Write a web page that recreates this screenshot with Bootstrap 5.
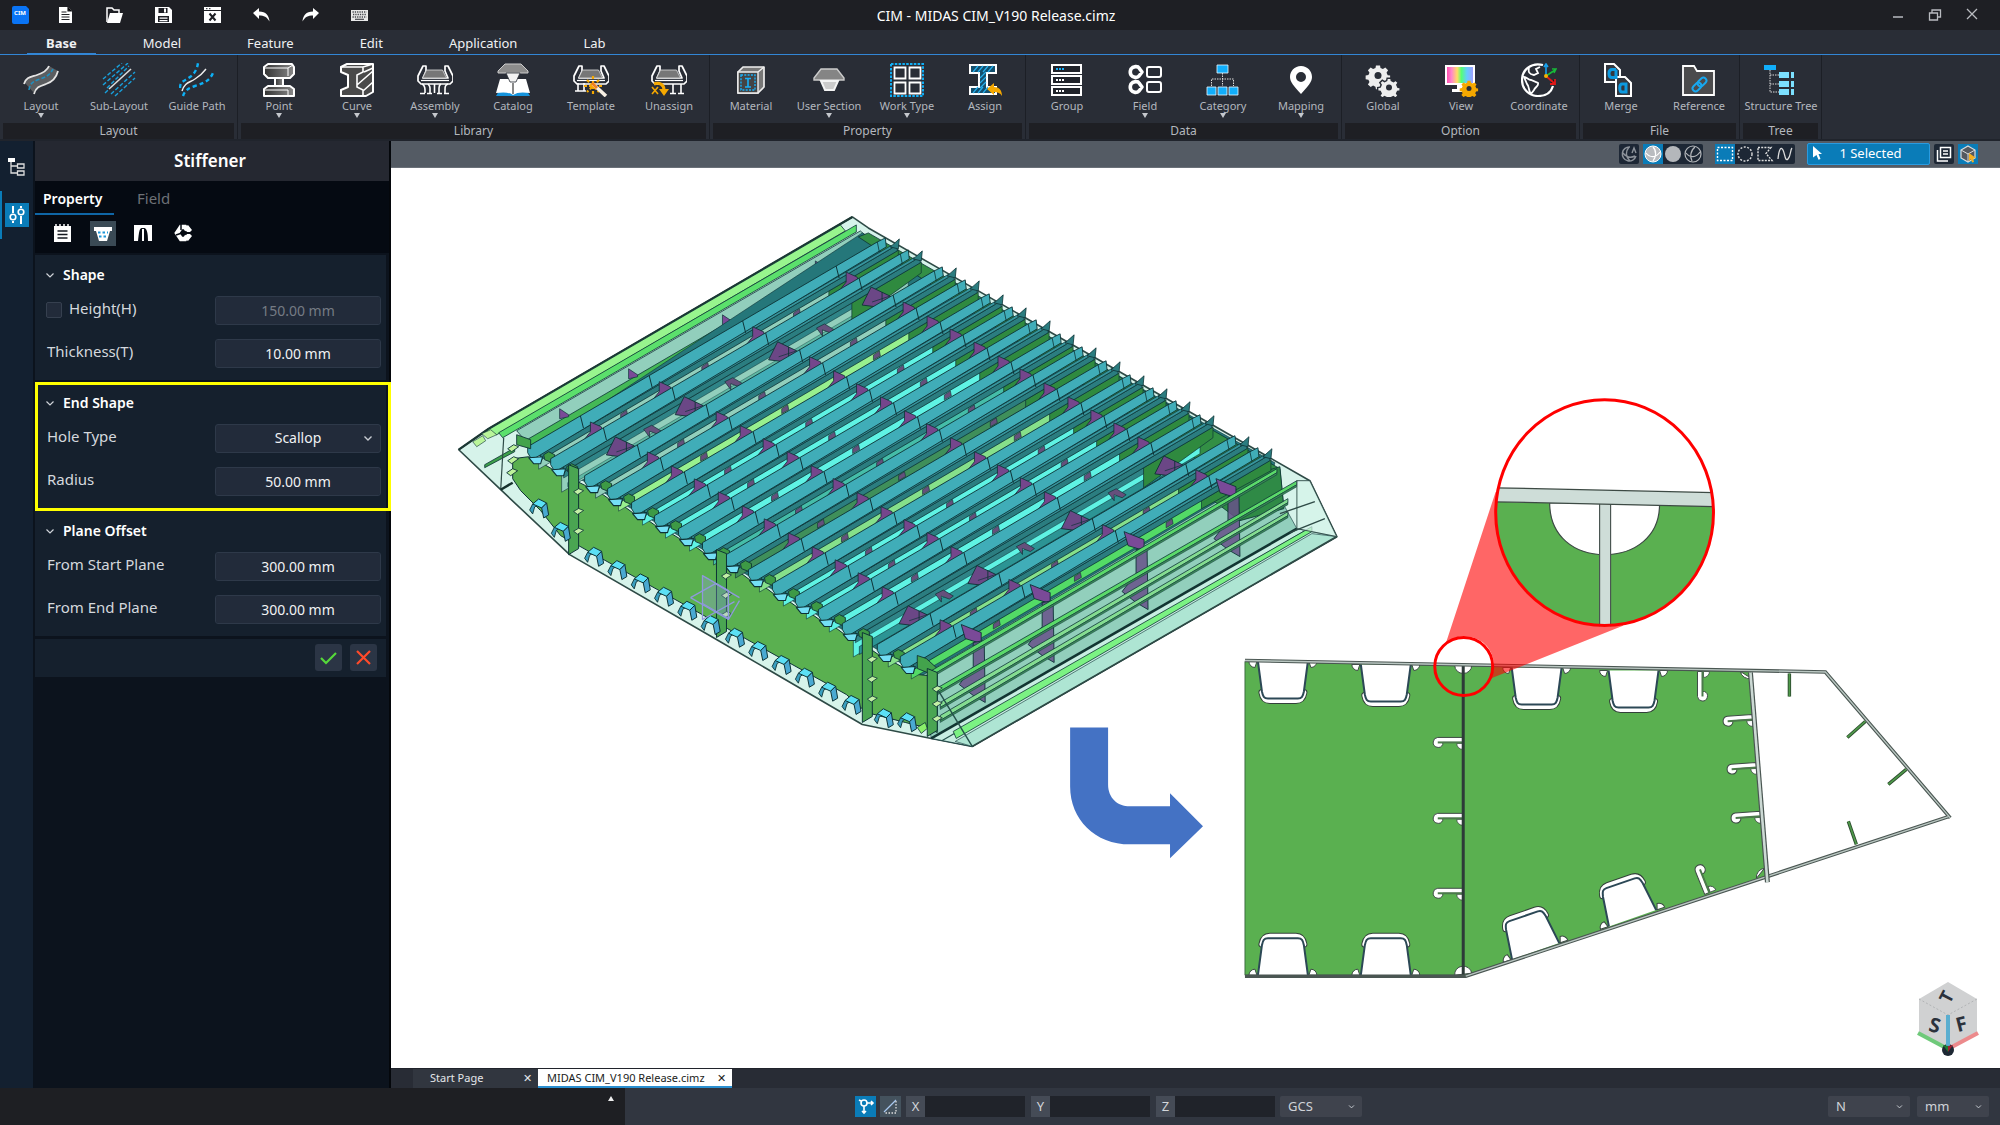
<!DOCTYPE html>
<html lang="en" data-bs-theme="dark">
<head>
<meta charset="utf-8">
<meta name="viewport" content="width=device-width, initial-scale=1">
<title>CIM - MIDAS CIM_V190 Release.cimz</title>
<link href="https://cdn.jsdelivr.net/npm/bootstrap@5.3.0/dist/css/bootstrap.min.css" rel="stylesheet">
<script src="https://cdn.jsdelivr.net/npm/bootstrap@5.3.0/dist/js/bootstrap.bundle.min.js"></script>
<style>
  body { font-family: "Noto Sans", "Open Sans", sans-serif; background: #0c131d; color: #e4e6ea; font-size: 14px; line-height: 20px; }
  button { font: inherit; color: inherit; background: none; border: 0; padding: 0; }
  svg { display: block; flex: none; }
  .titlebar { height: 30px; background: #1e1f24; padding: 0 20px 0 12px; color: #fff; }
  .apptitle { padding-top: 2px; }
  .quick { gap: 32px; }
  .appmark { margin-right: -4px; }
  .wincontrols { gap: 21px; color: #b9bbc0; }
  .tabrow { height: 25px; background: #292d36; border-bottom: 1px solid #3286d6; padding-left: 27px; gap: 28px; }
  .tabrow a { color: #f0f1f3; font-size: 13px; line-height: 26px; padding: 0 19px; text-decoration: none; height: 25px; }
  .tabrow a.active { font-weight: 700; border-bottom: 2px solid #3286d6; }
  .ribbon { background: #292d36; height: 86px; border-bottom: 2px solid #20242c; }
  .ribgroup { padding: 0 1px 1px 2px; border-right: 1px solid #1c1f26; }
  .ribbtn { width: 78px; height: 68px; padding-top: 8px; color: #b3b7be; font-size: 11px; line-height: 14px; white-space: nowrap; }
  .ribbtn > span { margin-top: 2px; }
  .ribbtn.drop::after { content: ""; border: 3px solid transparent; border-top: 5px solid #c5c8cd; border-bottom: 0; }
  .riblabel { background: #1e1f24; color: #b3b7be; font-size: 12px; line-height: 16px; height: 16px; margin: 0 2px 0 1px; }
  .rail { width: 34px; background: #132030; border-right: 1px solid #0b131d; padding-top: 2px; }
  .railtab { height: 48px; width: 33px; border-left: 2px solid transparent; padding-left: 3px; }
  .railtab.active { border-color: #0a7cb8; }
  .railtab.active svg { background: #0a7cb8; }
  .props { width: 357px; background: #0c131d; border-right: 2px solid #04070b; padding-left: 1px; }
  .propstitle { height: 40px; background: #252831; font-size: 17px; font-weight: 600; color: #fff; padding-right: 4px; }
  .proptabs { background: #050a12; height: 35px; }
  .proptabs a { color: #6d7176; text-decoration: none; font-size: 15px; width: 79px; line-height: 35px; height: 34px; padding-left: 8px; }
  .proptabs a.active { color: #fff; font-weight: 600; border-bottom: 2px solid #0f66a6; font-size: 14px; }
  .proptabs a + a { padding-left: 23px; }
  .proptools { background: #050a12; height: 37px; padding: 5px 0 0 15px; gap: 14px; }
  .proptools button { width: 26px; height: 25px; }
  .proptools button.active { background: #3a4a55; }
  .propbody { padding: 2px 3px 0 0; }
  .sect { background: #15202d; padding: 0 5px 12px 12px; margin-bottom: 3px; position: relative; }
  .sect h2 { font-size: 14px; font-weight: 600; color: #fff; line-height: 20px; margin: 0 0 0 -2px; padding: 10px 0 11px; gap: 8px; }
  .fieldrow { height: 29px; }
  .fieldrow + .fieldrow { margin-top: 14px; }
  .fieldrow label { font-size: 15px; color: #d4d8dd; line-height: 24px; height: 29px; }
  .fieldrow .form-control, .fieldrow .form-select { width: 166px; height: 29px; background-color: #222b3a; border: 1px solid #2e3949; border-radius: 3px; color: #f0f2f4; font-size: 14px; line-height: 20px; padding: 3px 8px; text-align: center; text-align-last: center; }
  .fieldrow .form-control:disabled { color: #757b84; }
  .fieldrow .form-check-input { width: 16px; height: 16px; margin: 6px 7px 0 -1px; background-color: #222b3a; border: 1px solid #36404f; border-radius: 2px; }
  .fieldrow .form-select, .unitsel { background-image: url("data:image/svg+xml,%3csvg xmlns='http://www.w3.org/2000/svg' viewBox='0 0 10 10'%3e%3cpath fill='none' stroke='%23c8ccd2' stroke-width='1.4' d='M1.500 3.500l3.500 3.500 3.500-3.500'/%3e%3c/svg%3e"); background-size: 10px 10px; background-position: right 7px center; background-repeat: no-repeat; }
  .callout { position: absolute; inset: -1px -5px -3px 0; border: 3px solid #ff0; pointer-events: none; }
  .actions { height: 38px; background: #15202d; padding-right: 9px; gap: 8px; }
  .actions button { width: 27px; height: 27px; background: #2b3545; border-radius: 3px; }
  .viewbar { height: 27px; background: #545b64; padding: 0 22px 0 0; border-bottom: 1px solid #6b7179; }
  .tool { background: #1d2735; border-radius: 2px; height: 20px; }
  .tool button { width: 20px; height: 20px; }
  .tool.setgap { margin-right: 12px; }
  .tool .active { background: #0a7cb8; }
  .selcount { width: 123px; height: 22px; background: #0a7cb8; border: 1px solid #2a9be0; border-radius: 2px; color: #fff; font-size: 13px; line-height: 18px; padding: 0 11px 2px 5px; }
  .stage { background: #fff; min-height: 0; position: relative; }
  .stage > svg.scene { width: 100%; height: 100%; }
  .navcube { position: absolute; right: 16px; bottom: 12px; }
  .doctabs { height: 20px; background: #282c35; border-top: 1px solid #20232b; padding-left: 22px; }
  .doctab { font-size: 11px; line-height: 18px; background: #31363f; color: #e4e6ea; padding: 0 6px 0 17px; width: 125px; }
  .doctab.active { background: #fff; color: #1a1c20; border-bottom: 2px solid #2a8fd0; width: 194px; padding-left: 9px; }
  .statusbar { height: 37px; background: #313640; }
  .msgbox { width: 31.25%; background: #1e1f23; padding: 8px 11px 0 0; }
  .coordtools { padding-left: 230px; gap: 4px; }
  .coordtools > button { width: 21px; height: 21px; background: #44525d; }
  .coordtools > button.active { background: #0a7cb8; }
  .axisbox { height: 21px; margin-right: 1px; margin-left: 1px; }
  .axisbox label { width: 19px; background: #454b56; color: #d4d7db; text-align: center; font-size: 13px; line-height: 21px; }
  .axisbox input { width: 100px; height: 21px; border: 0; border-radius: 0; background: #20232a; padding: 0 4px; }
  .unitsel { width: 82px; height: 21px; background-color: #3f434d; border: 0; border-radius: 2px; color: #d0d3d8; font-size: 13px; line-height: 21px; padding: 0 20px 0 8px; background-size: 7px 7px; }
  .unitsel.short { width: 72px; }
  .units { padding-right: 11px; gap: 7px; }
</style>
</head>
<body class="vh-100 d-flex flex-column overflow-hidden">

<header class="titlebar d-flex align-items-center">
  <div class="quick d-flex align-items-center flex-fill w-25">
    <svg class="appmark" width="17" height="18" viewBox="0 0 17 18"><path fill="#0a74f5" d="M2 0h12l3 3v13a2 2 0 0 1-2 2H2a2 2 0 0 1-2-2V2a2 2 0 0 1 2-2z"/><text x="8" y="9" font-size="6" font-weight="700" fill="#fff" text-anchor="middle">CIM</text></svg>
    <button aria-label="New"><svg width="17" height="18" viewBox="0 0 17 18"><path fill="#fff" d="M2 1h9l4 4v12H2z"/><path stroke="#1e1f24" stroke-width="1.200" d="M4.500 6h5M4.500 8.500h8M4.500 11h8M4.500 13.500h8M11 1v4h4"/></svg></button>
    <button aria-label="Open"><svg width="17" height="18" viewBox="0 0 17 18"><path fill="none" stroke="#fff" stroke-width="1.500" d="M1 16V2h5l2 2h5v4"/><path fill="#fff" d="M4 7h13l-3 10H1z"/></svg></button>
    <button aria-label="Save"><svg width="17" height="18" viewBox="0 0 17 18"><path fill="#fff" d="M0 1h14l3 3v13H0z"/><path fill="#1e1f24" d="M3.500 2h9v5h-9zM3 10h11v6H3z"/><path fill="#fff" d="M9 2.500h2v4H9zM4.500 11.500h8v1.200h-8zM4.500 14h8v1.200h-8z"/></svg></button>
    <button aria-label="Close model"><svg width="17" height="18" viewBox="0 0 17 18"><path fill="#fff" d="M0 1h17v16H0z"/><path stroke="#1e1f24" d="M0 4.500h17M2 2.700h1.500M5 2.700h1.500"/><path stroke="#1e1f24" stroke-width="2" d="M5.500 7.500l6 7M11.500 7.500l-6 7"/></svg></button>
    <button aria-label="Undo"><svg width="17" height="18" viewBox="0 0 17 18"><path fill="#fff" d="M0 7l6-5v3.500c7 0 10 4 10.500 10C14 11 11 9.500 6 9.500V13z"/></svg></button>
    <button aria-label="Redo"><svg width="17" height="18" viewBox="0 0 17 18"><path fill="#fff" d="M17 7l-6-5v3.500c-7 0-10 4-10.500 10C3 11 6 9.500 11 9.500V13z"/></svg></button>
    <button aria-label="Keyboard"><svg width="17" height="18" viewBox="0 0 17 18"><path fill="#e8e8e8" d="M0 4h17v11H0z"/><path stroke="#44464c" stroke-width="1.300" stroke-dasharray="1.300 1" d="M1.500 6h14M2 8.500h13.500M1.500 11h14"/><path stroke="#44464c" stroke-width="1.200" d="M4 13.300h9"/></svg></button>
  </div>
  <div class="apptitle text-center">CIM - MIDAS CIM_V190 Release.cimz</div>
  <div class="wincontrols d-flex justify-content-end align-items-center flex-fill w-25">
    <button aria-label="Minimize"><svg width="16" height="16" viewBox="0 0 16 16"><path stroke="currentColor" stroke-width="1.500" d="M3 10h10"/></svg></button>
    <button aria-label="Restore"><svg width="16" height="16" viewBox="0 0 16 16"><path fill="none" stroke="currentColor" stroke-width="1.300" d="M2.500 6h8v7h-8zM5 6V3h8.500v7H11"/></svg></button>
    <button aria-label="Close"><svg width="16" height="16" viewBox="0 0 16 16"><path stroke="currentColor" stroke-width="1.300" d="M3 2l10 10M13 2L3 12"/></svg></button>
  </div>
</header>

<nav class="tabrow d-flex">
  <a href="#" class="active">Base</a><a href="#">Model</a><a href="#">Feature</a><a href="#">Edit</a><a href="#">Application</a><a href="#">Lab</a>
</nav>

<svg width="0" height="0" class="position-absolute" aria-hidden="true">
  <defs>
    <linearGradient id="gMetal" x1="0" x2="1"><stop offset="0" stop-color="#333"/><stop offset="1" stop-color="#888"/></linearGradient>
    <linearGradient id="gRain" x1="0" x2="1"><stop offset="0" stop-color="#f4a"/><stop offset=".2" stop-color="#f8c"/><stop offset=".4" stop-color="#fd6"/><stop offset=".55" stop-color="#5f7"/><stop offset=".75" stop-color="#6cf"/><stop offset="1" stop-color="#a9f"/></linearGradient>
    <g id="bridge"><path fill="#292d36" stroke="#fff" stroke-width="1.700" stroke-linejoin="round" d="M1 18V13L6 3h3v5l-3 7h25l-3-7V3h3l5 10v5l-3 3H4z"/><path fill="#777" stroke="#ddd" stroke-width=".8" d="M9.500 7h16l4 8h-24z"/><path stroke="#fff" stroke-width="1.200" d="M4 17.500h28"/></g>
    <g id="legs" fill="none" stroke="#fff" stroke-width="1.600"><path d="M5 21c2 1 3 3 3 6v3M13 30v-5c0-2-1-3-2-4M17.500 21v9M24 21c-2 1-2 2-2 4v5M31 21c-3 1-3 3-3 6v3M3 30.500h5M10 30.500h5M20 30.500h5M27 30.500h5"/></g>
    <path id="gear" d="M-1.700-8h3.400l.4 2.200 2 .9 2-1.300 2.300 2.300-1.300 2 .9 2 .1.100 2 .3v3l-2.300.4-.9 2 1.300 2-2.300 2.200-2-1.300-2 .9-.4 2.200h-3.200l-.4-2.200-2-.9-2 1.300-2.300-2.200 1.300-2-.9-2-2.300-.4v-3l2.300-.4.9-2-1.300-2 2.300-2.300 2 1.300 2-.9z"/>
  </defs>
</svg>

<div class="ribbon d-flex">
  <section class="ribgroup d-flex flex-column"><div class="d-flex">
    <button class="ribbtn drop d-flex flex-column align-items-center"><svg width="36" height="34" viewBox="0 0 36 34"><path fill="#5b5d60" d="M2 20c2-6 7-6 12-8 6-2 10-4 12-9l9 5c-2 8-6 11-12 13-7 2-10 4-12 9z"/><path fill="none" stroke="#e4e4e4" stroke-width="1.800" d="M1 21c2-7 7-7 13-9 6-2 10-4 12-9M11 31c2-7 6-8 12-10 6-2 10-5 12-13"/><path fill="none" stroke="#1d8fc0" stroke-width="1.600" stroke-dasharray="4 2" d="M6 27c1-8 6-9 11-11 6-2 10-4 13-10"/></svg><span>Layout</span></button>
    <button class="ribbtn d-flex flex-column align-items-center"><svg width="36" height="34" viewBox="0 0 36 34"><path stroke="#ddd" stroke-width="1.600" d="M8 26L30 6"/><path stroke="#18a0dc" stroke-width="1.400" stroke-dasharray="4 2" d="M2 16L21 0M2 22L27 0M4 30L8 26M10 31L34 9M14 33L34 15M6 25L28 3"/></svg><span>Sub-Layout</span></button>
    <button class="ribbtn d-flex flex-column align-items-center"><svg width="36" height="34" viewBox="0 0 36 34"><path fill="none" stroke="#eee" stroke-width="1.400" d="M3 28c3-9 7-8 13-12 5-3 8-6 11-10"/><g fill="none" stroke="#0db0f5" stroke-width="2.400" stroke-dasharray="4 3"><path d="M1 25c0-7 5-7 10-11 4-3 7-7 8-14"/><path d="M4 33c2-6 6-8 12-10 10-3 15-6 18-13"/></g></svg><span>Guide Path</span></button>
  </div><div class="riblabel text-center">Layout</div></section>

  <section class="ribgroup d-flex flex-column"><div class="d-flex">
    <button class="ribbtn drop d-flex flex-column align-items-center"><svg width="36" height="34" viewBox="0 0 36 34"><g stroke="#fff" stroke-width="2" stroke-linejoin="round" fill="url(#gMetal)"><path d="M3 4l4-3h24l2 3v7l-4 4H7l-4-4z"/><path d="M14 15h8v9h-8z"/><path d="M3 26l4-3h22l4 3v7H3z"/></g><path fill="none" stroke="#fff" d="M3 5h24v8M3 27h24v6M27 5l5-3"/></svg><span>Point</span></button>
    <button class="ribbtn drop d-flex flex-column align-items-center"><svg width="36" height="34" viewBox="0 0 36 34"><path fill="#4a4a4a" stroke="#fff" stroke-width="2" stroke-linejoin="round" d="M2 4l6-3h26v28l-7 4H2v-6l7-3V12L2 9z"/><path fill="none" stroke="#fff" stroke-width="1.600" d="M2 4h22l10-3M24 4v5l-6 3v12l6 3v6M18 22L34 8M24 28l10-9M25 9l9-4"/></svg><span>Curve</span></button>
    <button class="ribbtn drop d-flex flex-column align-items-center"><svg width="36" height="34" viewBox="0 0 36 34"><use href="#bridge"/><use href="#legs"/></svg><span>Assembly</span></button>
    <button class="ribbtn d-flex flex-column align-items-center"><svg width="36" height="34" viewBox="0 0 36 34"><path fill="#1593dc" d="M1 33l3-5h28l3 5z"/><path fill="#fff" d="M5 16h26l4 14c-7-1-13-1-17 2-4-3-10-3-17-2z"/><path fill="#8c8c8c" stroke="#ccc" d="M10 1h16l7 7v2H3V8z"/><path fill="#f2f2f2" stroke="#292d36" stroke-width=".8" d="M11 10h14l-4 9h-6z"/><path fill="#888" d="M17 20h2v11h-2z"/></svg><span>Catalog</span></button>
    <button class="ribbtn d-flex flex-column align-items-center"><svg width="36" height="34" viewBox="0 0 36 34"><use href="#bridge"/><path fill="none" stroke="#fff" stroke-width="1.600" d="M5 20v8M11 20v8M2 28h11"/><path stroke="#f5a800" stroke-width="2.200" stroke-dasharray="3 2" d="M20 13v18M11 23h18M14 17l12 12M26 17L14 29"/><path stroke="#f7efe4" stroke-width="3.600" d="M20 21l13 12"/><path stroke="#f08020" stroke-width="3" d="M19 20l5 5"/></svg><span>Template</span></button>
    <button class="ribbtn d-flex flex-column align-items-center"><svg width="36" height="34" viewBox="0 0 36 34"><use href="#bridge"/><path fill="none" stroke="#fff" stroke-width="1.600" d="M22 21v9M30 21v9M19 30.500h6M27 30.500h6"/><path fill="none" stroke="#f5a800" stroke-width="3" d="M3 21c6-2 10 1 10 6"/><path fill="#f5a800" d="M8 26h10l-5 7z"/><path stroke="#f5a800" stroke-width="1.600" d="M1 24l6 7M7 24l-6 7"/></svg><span>Unassign</span></button>
  </div><div class="riblabel text-center">Library</div></section>

  <section class="ribgroup d-flex flex-column"><div class="d-flex">
    <button class="ribbtn d-flex flex-column align-items-center"><svg width="36" height="34" viewBox="0 0 36 34"><path fill="#777" stroke="#eee" stroke-width="1.700" stroke-linejoin="round" d="M5 9l5-5h21v20l-6 6H5z"/><path fill="#444" stroke="#eee" stroke-width="1.400" d="M5 9h20v21H5zM25 9l6-5"/><path fill="none" stroke="#18b0f8" stroke-width="1.400" stroke-dasharray="2 1.300" d="M8 12h14v15H8z"/><path stroke="#18b0f8" stroke-width="1.600" d="M12 15.500h6M12 24h6M15 15.500V24"/></svg><span>Material</span></button>
    <button class="ribbtn drop d-flex flex-column align-items-center"><svg width="36" height="34" viewBox="0 0 36 34"><path fill="#858585" stroke="#ccc" stroke-width="1.400" d="M10 6h16l7 9v2H3v-2z"/><path fill="#ccc" stroke="#f4f4f4" stroke-width="2" d="M10 18h17l-4 9h-9z"/></svg><span>User Section</span></button>
    <button class="ribbtn drop d-flex flex-column align-items-center"><svg width="36" height="34" viewBox="0 0 36 34"><path fill="none" stroke="#10aef5" stroke-width="2" stroke-dasharray="2.500 1.300" d="M2 1h32v32H2z"/><path fill="none" stroke="#fff" stroke-width="1.800" d="M5.500 4.500h11v11h-11zM20.500 4.500h11v11h-11zM5.500 19.500h11v11h-11zM20.500 19.500h11v11h-11z"/></svg><span>Work Type</span></button>
    <button class="ribbtn d-flex flex-column align-items-center"><svg width="36" height="34" viewBox="0 0 36 34"><path fill="#14506e" stroke="#fff" stroke-width="2" d="M3 2h26v8h-9v14h9v7H3v-7h9V10H3z"/><path stroke="#27b0ee" stroke-width="1.200" d="M6 9l5-6M11 9l5-6M16 9l5-6M21 9l5-6M13 15l6-6M13 20l6-6M13 25l6-6M6 30l5-6M11 30l5-6M16 30l5-6"/><path fill="#f5a800" d="M20 26l7-6v4c5 0 8 3 8 9-2-3-4-4-8-4v3z"/></svg><span>Assign</span></button>
  </div><div class="riblabel text-center">Property</div></section>

  <section class="ribgroup d-flex flex-column"><div class="d-flex">
    <button class="ribbtn d-flex flex-column align-items-center"><svg width="36" height="34" viewBox="0 0 36 34"><path fill="#20232a" stroke="#fff" stroke-width="2" d="M3 2h29v8H3zM3 13h29v8H3zM3 24h29v8H3z"/><path stroke="#18b0f8" stroke-width="2" stroke-dasharray="2 1" d="M7 6h9"/><path stroke="#fff" stroke-width="2" stroke-dasharray="2 1" d="M7 17h9M7 28h9"/></svg><span>Group</span></button>
    <button class="ribbtn drop d-flex flex-column align-items-center"><svg width="36" height="34" viewBox="0 0 36 34"><g fill="none" stroke="#fff"><path stroke-width="3.600" stroke-linejoin="round" d="M4 6c2-3 7-3 8-1l3 4-3 4c-2 2-6 2-8-1-1-2-1-4 0-6zM4 21c2-3 7-3 8-1l3 4-3 4c-2 2-6 2-8-1-1-2-1-4 0-6z"/><rect x="20" y="4" width="14" height="10" rx="2" stroke-width="2"/><rect x="20" y="19" width="14" height="10" rx="2" stroke-width="2"/></g></svg><span>Field</span></button>
    <button class="ribbtn drop d-flex flex-column align-items-center"><svg width="36" height="34" viewBox="0 0 36 34"><path fill="#11aefb" stroke="#e8f6ff" stroke-width=".8" d="M12 2h11v8H12zM2 24h9v8H2zM13 24h9v8h-9zM24 24h9v8h-9z"/><path fill="none" stroke="#ddd" stroke-dasharray="1.500 1" d="M17.500 10v13M6.500 23v-7h22v7"/></svg><span>Category</span></button>
    <button class="ribbtn drop d-flex flex-column align-items-center"><svg width="36" height="34" viewBox="0 0 36 34"><path fill="#fff" fill-rule="evenodd" d="M18 3c6.500 0 11 5 11 11 0 5-4 9-11 17C11 23 7 19 7 14 7 8 11.500 3 18 3zm0 6a5 5 0 1 0 0 10 5 5 0 0 0 0-10z"/></svg><span>Mapping</span></button>
  </div><div class="riblabel text-center">Data</div></section>

  <section class="ribgroup d-flex flex-column"><div class="d-flex">
    <button class="ribbtn d-flex flex-column align-items-center"><svg width="36" height="34" viewBox="0 0 36 34"><use href="#gear" transform="translate(13 12) scale(1.200)" fill="#eee"/><circle cx="13" cy="12.500" r="3.500" fill="#292d36"/><use href="#gear" transform="translate(24 24) scale(1.100)" fill="#eee" stroke="#292d36" stroke-width="1.300"/><circle cx="24" cy="24.500" r="3" fill="#292d36"/></svg><span>Global</span></button>
    <button class="ribbtn d-flex flex-column align-items-center"><svg width="36" height="34" viewBox="0 0 36 34"><path fill="url(#gRain)" stroke="#fff" stroke-width="2" d="M3 3h28v18H3z"/><path fill="#fff" d="M14 21h6v4h3v4H9v-3h5z"/><use href="#gear" transform="translate(26 25) scale(.9)" fill="#f5a800"/><circle cx="26" cy="25.500" r="2.500" fill="#292d36"/></svg><span>View</span></button>
    <button class="ribbtn d-flex flex-column align-items-center"><svg width="36" height="34" viewBox="0 0 36 34"><path fill="none" stroke="#fff" stroke-width="2.200" d="M22 2C10-1 1 7 1 17s8 16 16 16c7 0 13-3 15-10"/><path fill="none" stroke="#fff" stroke-width="1.800" d="M8 5c-1 4 0 6 5 7l4-2-2-4 4-2M3 14c3 0 4 3 7 3l7 3c1 3-3 4-4 7l-3 4c-3-3-1-7-4-10z"/><path stroke="#18a0ec" stroke-width="1.600" d="M25 13V2M23 4l2-3 2 3"/><path stroke="#18b83a" stroke-width="1.600" d="M25 13l9-6M31 6l4 0-2 4"/><path stroke="#e01818" stroke-width="1.800" d="M25 13l8 7M34 16v5h-5"/><circle cx="25" cy="13" r="2" fill="#f5b000"/></svg><span>Coordinate</span></button>
  </div><div class="riblabel text-center">Option</div></section>

  <section class="ribgroup d-flex flex-column"><div class="d-flex">
    <button class="ribbtn d-flex flex-column align-items-center"><svg width="36" height="34" viewBox="0 0 36 34"><path fill="#33373e" stroke="#fff" stroke-width="2" d="M2 1h9l6 6v12H2z"/><path fill="#33373e" stroke="#fff" stroke-width="2" d="M13 14h9l6 6v13H13z"/><path fill="none" stroke="#0d9ae0" stroke-width="3" d="M13 6.500H9c-4 0-4 8 0 8h4v-8M23 21h-4c-3 0-3 8 0 8h4v-8z"/></svg><span>Merge</span></button>
    <button class="ribbtn d-flex flex-column align-items-center"><svg width="36" height="34" viewBox="0 0 36 34"><path fill="#4b4b4d" stroke="#fff" stroke-width="1.800" d="M2 32V3h11l3 5h17v24z"/><g fill="none" stroke="#18a8f0" stroke-width="1.900"><rect x="16" y="16" width="10" height="6" rx="3" transform="rotate(-45 21 19)"/><rect x="11" y="21" width="10" height="6" rx="3" transform="rotate(-45 16 24)"/></g></svg><span>Reference</span></button>
  </div><div class="riblabel text-center">File</div></section>

  <section class="ribgroup d-flex flex-column"><div class="d-flex">
    <button class="ribbtn d-flex flex-column align-items-center"><svg width="36" height="34" viewBox="0 0 36 34"><path fill="#11aefb" d="M1 2h12v5H1z"/><path fill="#7ce0ff" d="M16 9h10v6H16zM16 18h10v6H16zM16 26h10v6H16zM28 9h3v6h-3zM28 18h3v6h-3zM28 26h3v6h-3z"/><path fill="none" stroke="#ddd" stroke-dasharray="1.500 1" d="M7 7v22h9M7 12h9M7 21h9"/></svg><span>Structure Tree</span></button>
  </div><div class="riblabel text-center">Tree</div></section>
</div>

<main class="d-flex flex-fill overflow-hidden">
  <nav class="rail d-flex flex-column">
    <button class="railtab" aria-label="Tree"><svg width="24" height="24" viewBox="0 0 24 24" fill="none"><path fill="#fff" d="M3 3h7v4H3z"/><path stroke="#ddd" stroke-width="1.300" d="M6 7v11h6M6 11h6M12.500 9h6.500v4h-6.500zM12.500 16h6.500v4h-6.500z"/></svg></button>
    <button class="railtab active" aria-label="Properties"><svg width="24" height="24" viewBox="0 0 24 24" fill="none" stroke="#fff" stroke-width="2"><path d="M8 3v7M8 18v2M16 3v2M16 13v8"/><circle cx="8" cy="14" r="2.800" stroke-width="1.600"/><circle cx="16" cy="9" r="2.800" stroke-width="1.600"/></svg></button>
  </nav>

  <aside class="props">
    <div class="propstitle d-flex align-items-center justify-content-center">Stiffener</div>
    <nav class="proptabs d-flex"><a href="#" class="active">Property</a><a href="#">Field</a></nav>
    <div class="proptools d-flex">
      <button aria-label="General"><svg width="26" height="25" viewBox="0 0 26 25"><path fill="#fff" d="M4 5h17v16H4z"/><path stroke="#fff" stroke-width="1.500" d="M6 3v3M10 3v3M14 3v3M18 3v3"/><path stroke="#14181f" stroke-width="1.400" d="M7.500 10h10M7.500 13.500h10M7.500 17h10"/></svg></button>
      <button class="active" aria-label="Section"><svg width="26" height="25" viewBox="0 0 26 25"><path fill="#fff" d="M4 6h18v4h-2l-3 10H9L6 10H4z"/><path stroke="#1c96d8" stroke-width="2" stroke-dasharray="2.500 2" d="M8 11.500h10M9 15.500h8"/></svg></button>
      <button aria-label="Cut"><svg width="26" height="25" viewBox="0 0 26 25"><path fill="#fff" d="M4 4h18v16h-4c0-8-1-12-3.500-13h-3C9 8 9 12 8 20H4z"/><path stroke="#fff" stroke-width="2" d="M13 8v12"/></svg></button>
      <button aria-label="Link"><svg width="26" height="25" viewBox="0 0 26 25"><path fill="none" stroke="#fff" stroke-width="4.500" d="M17 9l-2-3h-4l-4 6 4 6h4l2-3"/><path stroke="#050a12" stroke-width="1.500" d="M11 3v6M6 14l6-2"/><path fill="#fff" d="M14 7l4-3 4 5-2 2h-3zM14 17l4 3 4-5-2-2h-3z"/></svg></button>
    </div>
    <div class="propbody">
      <section class="sect">
        <h2 class="d-flex align-items-center"><svg width="10" height="10" viewBox="0 0 10 10" fill="none" stroke="#cfd3d8" stroke-width="1.200"><path d="M1.500 3.500L5 7l3.500-3.500"/></svg>Shape</h2>
        <div class="fieldrow d-flex"><input type="checkbox" class="form-check-input" id="useH"><label for="useH" class="flex-fill">Height(H)</label><input class="form-control" aria-label="Height" value="150.00 mm" disabled></div>
        <div class="fieldrow d-flex"><label for="thk" class="flex-fill">Thickness(T)</label><input class="form-control" id="thk" value="10.00 mm"></div>
      </section>
      <section class="sect">
        <h2 class="d-flex align-items-center"><svg width="10" height="10" viewBox="0 0 10 10" fill="none" stroke="#cfd3d8" stroke-width="1.200"><path d="M1.500 3.500L5 7l3.500-3.500"/></svg>End Shape</h2>
        <div class="fieldrow d-flex"><label for="hole" class="flex-fill">Hole Type</label><select class="form-select" id="hole"><option>Scallop</option></select></div>
        <div class="fieldrow d-flex"><label for="rad" class="flex-fill">Radius</label><input class="form-control" id="rad" value="50.00 mm"></div>
        <div class="callout"></div>
      </section>
      <section class="sect">
        <h2 class="d-flex align-items-center"><svg width="10" height="10" viewBox="0 0 10 10" fill="none" stroke="#cfd3d8" stroke-width="1.200"><path d="M1.500 3.500L5 7l3.500-3.500"/></svg>Plane Offset</h2>
        <div class="fieldrow d-flex"><label for="fs" class="flex-fill">From Start Plane</label><input class="form-control" id="fs" value="300.00 mm"></div>
        <div class="fieldrow d-flex"><label for="fe" class="flex-fill">From End Plane</label><input class="form-control" id="fe" value="300.00 mm"></div>
      </section>
      <div class="actions d-flex align-items-center justify-content-end">
        <button aria-label="Apply"><svg class="m-auto" width="19" height="19" viewBox="0 0 19 19" fill="none" stroke="#55d83a" stroke-width="2.200"><path d="M2 10l5 5L17 5"/></svg></button>
        <button aria-label="Cancel"><svg class="m-auto" width="19" height="19" viewBox="0 0 19 19" fill="none" stroke="#ff4a2a" stroke-width="2.200"><path d="M3 3l13 13M16 3L3 16"/></svg></button>
      </div>
    </div>
  </aside>

  <div class="d-flex flex-column flex-fill overflow-hidden">
    <div class="viewbar d-flex align-items-center justify-content-end">
      <div class="tool me-1"><button aria-label="Auto render"><svg width="20" height="20" viewBox="0 0 20 20" fill="none" stroke="#8d939b" stroke-width="1.400"><path d="M11 3a7 7 0 1 0 6 9M4 9c4 5 8 5 12 3M10 3c-4 5-3 10 1 14M13 9l2-5 2 5"/></svg></button></div>
      <div class="tool setgap d-flex">
        <button class="active" aria-label="Shaded edges"><svg width="20" height="20" viewBox="0 0 20 20"><circle cx="10" cy="10" r="8" fill="#b9bcc0" stroke="#fff"/><path fill="none" stroke="#fff" stroke-width="1.200" d="M3 9c4 5 10 5 14-1M10 3c4 4 3 10 0 14"/></svg></button>
        <button aria-label="Shaded"><svg width="20" height="20" viewBox="0 0 20 20"><circle cx="10" cy="10" r="8" fill="#b4b7bb"/></svg></button>
        <button aria-label="Wireframe"><svg width="20" height="20" viewBox="0 0 20 20" fill="none" stroke="#b4b7bb" stroke-width="1.200"><circle cx="10" cy="10" r="8"/><path d="M3 9c4 5 10 5 14-1M12 3C7 7 7 13 9 17"/></svg></button>
      </div>
      <div class="tool setgap d-flex">
        <button class="active" aria-label="Box select"><svg width="20" height="20" viewBox="0 0 20 20" fill="none" stroke="#fff" stroke-width="1.400" stroke-dasharray="2 1.500"><path d="M2.500 3.500h15v13h-15z"/></svg></button>
        <button aria-label="Circle select"><svg width="20" height="20" viewBox="0 0 20 20" fill="none" stroke="#ddd" stroke-width="1.400" stroke-dasharray="2 1.500"><circle cx="10" cy="10" r="7"/></svg></button>
        <button aria-label="Polygon select"><svg width="20" height="20" viewBox="0 0 20 20" fill="none" stroke="#ddd" stroke-width="1.400" stroke-dasharray="2 1.200"><path d="M3 3.500h13l-5 6 6 7H3z"/></svg></button>
        <button aria-label="Curve select"><svg width="20" height="20" viewBox="0 0 20 20" fill="none" stroke="#ddd" stroke-width="1.300"><path d="M3 15C4 5 6 2 8 6s2 12 5 9 2-9 4-11"/></svg></button>
      </div>
      <button class="selcount d-flex align-items-center me-1"><svg width="10" height="14" viewBox="0 0 10 14"><path fill="#fff" d="M0 0l9 8H5.500l2 5-2 .8-2-4.800L0 11.500z"/></svg><span class="flex-fill text-center">1 Selected</span></button>
      <div class="tool me-1"><button aria-label="List"><svg width="20" height="20" viewBox="0 0 20 20" fill="none" stroke="#fff" stroke-width="1.500"><path d="M6.500 3.500h10v10h-10zM3.500 6v11H14M9 7h5M9 10h5"/></svg></button></div>
      <div class="tool"><button class="active" aria-label="Pick solid"><svg width="20" height="20" viewBox="0 0 20 20"><path fill="#55595f" stroke="#ddd" stroke-width="1.200" d="M10 2l7 4v8l-7 4-7-4V6z"/><path fill="none" stroke="#ddd" d="M3 6l7 4 7-4M10 10v8"/><path fill="#f5b020" d="M11 9l7 5-3 .5 1 3.500-2 .5-1-3.500-2 2z"/></svg></button></div>
    </div>

    <div class="stage flex-fill">
      <svg class="scene" viewBox="391 167 1609 901">
        <defs>
          <g id="slot">
            <path fill="#fff" stroke="#3d4a44" stroke-width="1" d="M-34 0a6 6 0 0 0 6 6l2-6zM34 0a6 6 0 0 1-6 6l-2-6z"/>
            <path fill="none" stroke="#33403a" stroke-width="7" stroke-linecap="round" d="M-21 31c1 6 4 8 8 8h26c4 0 7-2 8-8"/>
            <path fill="none" stroke="#fff" stroke-width="5" stroke-linecap="round" d="M-21 31c1 6 4 8 8 8h26c4 0 7-2 8-8"/>
            <path fill="#fff" stroke="#2c4856" stroke-width="2" d="M-25 0l4 30c1 5 2 7 6 7h30c4 0 5-2 6-7l4-30"/>
          </g>
          <g id="hook">
            <path fill="#fff" stroke="#3d4a44" d="M0-3h-25a5 5 0 1 0 5 7v-2H0z"/>
            <path fill="#fff" stroke="#3d4a44" stroke-width=".8" d="M0 3v6a6 6 0 0 1-6-6z"/>
            <path stroke="#4b7a4b" stroke-width="2" d="M-25 2H0"/>
          </g>
          <clipPath id="lens"><ellipse cx="1605" cy="512" rx="109" ry="114"/></clipPath>
        </defs>
        <g id="hull" stroke-linejoin="round"></g>

        <path fill="#4472c4" d="M1070 727h38v57c0 13 9 22 22 22h40v-13l33 33-33 32v-14h-40c-35 0-60-25-60-58z"/>

        <g id="sectionview">
          <path fill="#5ab050" stroke="#2f5a33" stroke-width=".8" d="M1245 661l506 10 16 205-301 99h-221z"/>
          <use href="#slot" x="1283" y="661"/><use href="#slot" x="1386" y="664"/><use href="#slot" x="1537" y="667"/><use href="#slot" x="1634" y="670"/>
          <use href="#slot" transform="translate(1283 975) rotate(180)"/><use href="#slot" transform="translate(1386 975) rotate(180)"/>
          <use href="#slot" transform="translate(1536 951) rotate(161)"/><use href="#slot" transform="translate(1633 918) rotate(161)"/>
          <use href="#hook" x="1463" y="740"/><use href="#hook" x="1463" y="816"/><use href="#hook" x="1463" y="891"/>
          <use href="#hook" transform="translate(1753 717) rotate(-4)"/><use href="#hook" transform="translate(1757 765) rotate(-4)"/><use href="#hook" transform="translate(1761 814) rotate(-4)"/>
          <use href="#hook" transform="translate(1701 671) rotate(-90)"/><use href="#hook" transform="translate(1708 893) rotate(68) scale(1 -1)"/>
          <g fill="#fff" stroke="#3d4a44"><path d="M1455 665a8.500 8 0 0 0 17 0zM1455 975a8.500 8 0 0 1 17-2zM1741 671a9 8 0 0 0 11 7zM1757 878a9 9 0 0 1 8-10z"/></g>
          <path stroke="#2d3a38" stroke-width="3" d="M1463.500 665v311"/>
          <g fill="none" stroke="#4a5652" stroke-width="3.600"><path d="M1245 660l581 11.500 125 146M1245 976h221l484-160"/></g>
          <g fill="none" stroke="#b9c6c1" stroke-width="1.400"><path d="M1245 660l581 11.500 125 146M1466 976l484-160"/></g>
          <path stroke="#4a5652" stroke-width="5" d="M1751 672l17 210"/><path stroke="#ccd9d4" stroke-width="2.600" d="M1751 672l17 210"/>
          <g stroke="#2e4e30" stroke-width="3.400"><path d="M1790 673v23M1866 721l-18 16M1907 769l-18 15M1849 821l8 23"/></g>
          <g stroke="#4f9a4a" stroke-width="1.600"><path d="M1790 673v23M1866 721l-18 16M1907 769l-18 15M1849 821l8 23"/></g>
        </g>

        <path fill="#f00" fill-opacity=".6" d="M1446 643L1496 491L1560 592L1624 625L1491 678A29 29 0 0 0 1446 643z"/>
        <g clip-path="url(#lens)">
          <path fill="#fff" d="M1490 390h230v240h-230z"/>
          <path fill="#5ab050" d="M1490 501l230 5v130h-230z"/>
          <path fill="#fff" stroke="#3d4a44" stroke-width="1.200" d="M1550 502c0 34 25 52 55 52s55-18 55-50z"/>
          <path fill="#ceddd8" stroke="#4a5652" stroke-width="1.200" d="M1600 500h11v130h-11z"/>
          <path fill="#ceddd8" stroke="#3d4a44" stroke-width="1.200" d="M1490 487l230 5v14l-230-5z"/>
        </g>
        <ellipse cx="1605" cy="512" rx="109" ry="113" fill="none" stroke="#f00" stroke-width="3"/>
        <circle cx="1464" cy="666" r="29" fill="none" stroke="#f00" stroke-width="3"/>
      </svg>

      <svg class="navcube" width="72" height="80" viewBox="1912 976 72 80">
        <path fill="#d0d1d2" d="M1948 982l29 17v33l-29 17-29-17v-33z"/>
        <path fill="none" stroke="#b2b4b6" stroke-dasharray="2 2" d="M1919 999l29 16 29-16"/>
        <path stroke="#6fc97a" stroke-width="4" d="M1918 1033l30 16"/><path stroke="#ec8a8c" stroke-width="4" d="M1978 1033l-30 16"/>
        <circle cx="1948" cy="1050" r="6" fill="#1d2733"/><path stroke="#5aaed0" stroke-width="4" d="M1948 1015v33"/>
        <path fill="#1c7a30" d="M1943 1045l5 1v6z"/><path fill="#a02030" d="M1953 1045l-5 1v6z"/>
        <g fill="#2c323c" font-weight="700" font-size="20" text-anchor="middle"><text transform="translate(1933 1032) rotate(14)">S</text><text transform="translate(1963 1031) rotate(-14)">F</text><text transform="translate(1947 997) rotate(-62)" font-size="18" dy="6">T</text></g>
      </svg>
    </div>

    <div class="doctabs d-flex">
      <a href="#" class="doctab d-flex justify-content-between text-decoration-none">Start Page<span>✕</span></a>
      <a href="#" class="doctab active d-flex justify-content-between text-decoration-none">MIDAS CIM_V190 Release.cimz<span>✕</span></a>
    </div>
  </div>
</main>

<footer class="statusbar d-flex">
  <div class="msgbox d-flex justify-content-end"><svg width="6" height="5" viewBox="0 0 6 5"><path fill="#eee" d="M3 0l3 5H0z"/></svg></div>
  <div class="coordtools d-flex align-items-center">
    <button class="active" aria-label="Snap"><svg width="21" height="21" viewBox="0 0 21 21" fill="none" stroke="#fff" stroke-width="1.600"><circle cx="9" cy="7" r="3"/><path d="M9 10v7M12 7h6M16 5l2 2-2 2M7 15l2 2 2-2M4 4l2 1"/></svg></button>
    <button aria-label="Relative"><svg width="21" height="21" viewBox="0 0 21 21" fill="none" stroke="#a8c8f0" stroke-width="1.300"><path d="M4 16L16 4"/><path stroke-dasharray="1.500 1.500" stroke="#ddd" d="M16 5v12H4"/></svg></button>
    <div class="axisbox d-flex"><label for="cx">X</label><input id="cx"></div>
    <div class="axisbox d-flex"><label for="cy">Y</label><input id="cy"></div>
    <div class="axisbox d-flex"><label for="cz">Z</label><input id="cz"></div>
    <select class="unitsel form-select" aria-label="Coordinate system"><option>GCS</option></select>
  </div>
  <div class="units d-flex align-items-center ms-auto">
    <select class="unitsel form-select" aria-label="Force unit"><option>N</option></select>
    <select class="unitsel short form-select" aria-label="Length unit"><option>mm</option></select>
  </div>
</footer>

<script>
(function () {
  // Isometric hull block: ribs run along D, spaced across the deck.
  var out = [], D = [353, -207], EDGE = '#0d3336';
  function poly(pts, fill, sw, stroke, extra) {
    out.push('<polygon points="' + pts.map(function (p) { return p[0].toFixed(1) + ',' + p[1].toFixed(1); }).join(' ') + '" fill="' + fill + '" stroke="' + (stroke || EDGE) + '" stroke-width="' + (sw === undefined ? 0.8 : sw) + '" ' + (extra || '') + '/>');
  }
  function line(a, b, c, w) { out.push('<path d="M' + a[0] + ' ' + a[1] + 'L' + b[0] + ' ' + b[1] + '" stroke="' + c + '" stroke-width="' + w + '" fill="none"/>'); }
  function band(s, a, b, fill, x0, x1, sw) {
    x0 = x0 || 0; x1 = x1 || 0; var k = D[1] / D[0];
    var xa = s[0] + x0, xb = s[0] + D[0] + x1, ya = s[1] + x0 * k, yb = s[1] + D[1] + x1 * k;
    poly([[xa, ya + a], [xb, yb + a], [xb, yb + b], [xa, ya + b]], fill, sw);
  }
  function at(s, t) { return [s[0] + D[0] * t, s[1] + D[1] * t]; }

  // shell
  poly([[458,449],[488,428],[852,216],[868,227],[1310,480],[1337,536],[972,746],[931,738],[862,724],[716,639],[569,554],[500,489]], '#d6f3ea', 1.6, '#2e4a46');
  line([458,449], [488,428], '#1c3834', 2.2);
  line([488,428], [852,216], '#1c3834', 2.2);
  poly([[516,430],[860,230],[876,244],[530,446]], '#92cfbc', 0.8);
  poly([[486,430],[840,224],[845,230],[496,434]], '#98f58e', 0.8);
  poly([[498,432],[856,224],[856,231],[502,437]], '#5be06c', 0.8);
  poly([[484,464],[514,447],[514,451],[484,467]], '#3da04b', 0.8);
  poly([[472,441],[482,435],[485,440],[476,446]], '#baf59a', 0.6);
  poly([[481,433],[490,429],[496,434],[487,438]], '#baf59a', 0.6);
  poly([[528,438],[874,236],[876,242],[530,446]], '#44b956', 0.8);
  [[559,408],[628,368],[722,314],[815,260]].forEach(function (p) { poly([[p[0], p[1]], [p[0] + 9, p[1] + 6], [p[0] + 9, p[1] + 8], [p[0], p[1] + 10]], '#7a4a98', 0.7); });

  // far bulkhead and field backing
  poly([[530,450],[862,232],[1275,462],[1270,480],[925,682],[905,665]], '#25777a', 0.6);
  poly([[858,236],[868,232],[1280,468],[1284,508],[1260,500]], '#338f45', 0.8);

  // starboard slab
  poly([[920,676],[1266,472],[1297,528],[931,738]], '#92cfbc', 0.6);
  poly([[1200,490],[1280,466],[1284,508],[1240,520]], '#2f8a46', 0.8);
  poly([[931,738],[1297,528],[1337,536],[972,746]], '#c8eee2', 0.8);
  poly([[955,741],[1312,533],[1337,536],[972,746]], '#aee5d3', 0.6);
  line([931,738], [1297,528], '#123532', 2.6);
  line([942,740], [1304,531], '#24504a', 1.2);
  poly([[953,731],[1312,526],[1312,531],[956,738]], '#7bf283', 0.8);
  line([972,746], [1337,536], '#2e4a46', 1.8);

  var S = [[532,450],[555,462],[589,479],[612,492],[636,506],[659,519],[683,532],[707,546],[729,559],[753,573],[777,587],[800,600],[823,613],[847,627],[882,648],[905,660]];
  var G = ['#92cfbc','#92cfbc','#92cfbc','#98f08e','#5ff3e4','#5ff3e4','#5ff3e4','#45bda8','#3f8f5a','#86e08a','#5ff3e4','#5ff3e4','#5ff3e4','#5ff3e4','#86e08a','#53db66'];
  var T = [0.11, 0.305, 0.57, 0.835];

  // front bulkhead
  var face = [[512,458]];
  S.forEach(function (s) { face.push([s[0] - 4, s[1] + 6], [s[0] + 12, s[1] + 14]); });
  face = face.concat([[937,676],[937,732],[925,727],[905,722],[866,712],[846,694],[716,622],[578,545],[560,535],[540,510],[520,490],[512,478]]);
  poly(face, '#5ab050', 1);

  S.forEach(function (s, i) {
    if (i > 0) {
      T.forEach(function (t) {
        var p = at(s, t);
        if (i === 2 || i === 14) {
          poly([[p[0] - 13, p[1] - 20], [p[0] + 6, p[1] - 11], [p[0] + 10, p[1] + 2], [p[0] - 22, p[1] - 2]], '#6b4786', 0.9);
          line([p[0] - 2, p[1] - 15], [p[0] - 2, p[1] - 2], EDGE, 0.9);
          line([p[0] - 12, p[1] - 5], [p[0] + 6, p[1] - 11], EDGE, 0.7);
        } else {
          poly([[p[0] - 4, p[1] - 18], [p[0] + 7, p[1] - 13], [p[0] + 10, p[1] - 2], [p[0] - 12, p[1] + 2], [p[0] - 4, p[1] - 8]], '#75468c', 0.8);
        }
      });
    }
    // rib: strip seen between ribs, inner face, flange, outer face
    var wide = (i === 1 || i === 13);
    band(s, 13, wide ? 33 : 22, G[i], 6, 0, 0.6);
    if (wide) { band(s, 14, 20, '#2f8487', 8, 0, 0.5); if (i === 13) band(s, 26, 34, '#2c9494', 12, -40, 0.6); else band(s, 27, 31, '#5fb8a4', 12, -30, 0.4); }
    var q = at(s, 0.84);
    poly([[q[0], q[1] + 14], [s[0] + 366, s[1] - 201], [s[0] + 366, s[1] - 190], [q[0], q[1] + (wide ? 34 : 22)]], '#2f8a3f', 0.7);
    band(s, 8, 14, '#2b7d80', 8, 12, 0.8);
    band(s, 5, 8, '#37959d', 4, 6, 0.7);
    poly([[s[0] + 358, s[1] - 204], [s[0] + 367, s[1] - 212], [s[0] + 366, s[1] - 202]], '#2b7d80', 0.8);
    poly([[s[0] - 5, s[1] - 4], [s[0] + 345, s[1] - 209], [s[0] + 353, s[1] - 213], [s[0] + 354, s[1] - 204], [s[0] + 3, s[1] + 7], [s[0] - 2, s[1] + 7], [s[0] - 5, s[1] + 2]], '#40adb8', 0.9);
    T.forEach(function (t) { var p = at(s, t); line([p[0] + 9, p[1] - 12], [p[0] + 12, p[1]], EDGE, 1); });
    line([s[0] + 345, s[1] - 209], [s[0] + 347, s[1] - 199], EDGE, 0.8);
    // small brackets on the strip
    [0.21, 0.44, 0.70].forEach(function (t) {
      var p = at(s, t);
      if (wide) poly([[p[0] + 14, p[1] + 10], [p[0] + 22, p[1] + 6], [p[0] + 32, p[1] + 12], [p[0] + 28, p[1] + 15], [p[0] + 20, p[1] + 12], [p[0] + 20, p[1] + 18]], '#65507c', 0.7);
      else poly([[p[0] + 14, p[1] + 7], [p[0] + 20, p[1] + 3], [p[0] + 21, p[1] + 8], [p[0] + 14, p[1] + 12]], '#65507c', 0.6);
    });
    // trough mouth and cap plate at the cut end
    poly([[s[0] - 4, s[1] + 7], [s[0] + 10, s[1] + 6], [s[0] + 8, s[1] + 13], [s[0] + 1, s[1] + 13]], '#74dff5', 1.1);
    if (i < 15) poly([[s[0] + 11, s[1] + 4], [s[0] + 16, s[1] + 1], [s[0] + 22, s[1] + 4], [s[0] + 22, s[1] + 13], [s[0] + 12, s[1] + 9]], '#3d9a45', 0.9);
  });
  poly([[516,434],[530,439],[530,448],[516,444]], '#43a34c', 0.9);
  poly([[917,655],[926,658],[937,668],[937,676],[917,668]], '#43a34c', 0.9);

  // starboard webs, then the longitudinals that pass in front of them
  [[1228,494],[1136,547],[1042,600],[973,640]].forEach(function (p) {
    poly([[p[0] - 12, p[1] - 16], [p[0] + 8, p[1] - 8], [p[0] + 8, p[1] + 3], [p[0] - 8, p[1] - 2]], '#7a4a98', 0.9);
    poly([[p[0] - 14, p[1] + 44], [p[0], p[1] + 26], [p[0], p[1] + 2], [p[0] + 11, p[1]], [p[0] + 12, p[1] + 62], [p[0], p[1] + 55]], '#67518a', 0.9, EDGE, 'fill-opacity=".85"');
  });
  [[928,672,1277,468],[936,688,1297,480],[940,702,1288,498],[940,715,1288,511]].forEach(function (r, i) {
    var c = i < 2 ? '#5bd96a' : '#84dc90';
    poly([[r[0], r[1]], [r[2], r[3]], [r[2], r[3] + 4], [r[0], r[1] + 5]], c, 0.8);
    poly([[r[0], r[1] + 5], [r[2], r[3] + 4], [r[2], r[3] + 6], [r[0], r[1] + 7]], '#3c8a58', 0.5);
  });
  poly([[1297,480],[1310,480],[1337,536],[1297,528]], '#d6f3ea', 0.9, '#2e4a46', 'fill-opacity=".7"');
  line([938, 690], [972, 746], '#24504a', 1.4);
  line([1280, 513], [1315, 501], '#2e4a46', 1.4);
  line([1290, 532], [1325, 518], '#2e4a46', 1.4);

  // posts on the cut plane
  [[568,464,90],[716,549,88],[862,632,90],[927,668,68]].forEach(function (p) {
    poly([[p[0], p[1]], [p[0] + 10, p[1] + 4], [p[0] + 10, p[1] + p[2] - 6], [p[0], p[1] + p[2]]], '#4aa552', 1);
    [0.3, 0.52, 0.74].forEach(function (t) {
      var y = p[1] + p[2] * t;
      poly([[p[0] + 5, y], [p[0] + 10, y - 3], [p[0] + 15, y - 1], [p[0] + 9, y + 3]], '#c3f0a5', 0.8);
    });
  });
  line([503, 437], [500, 489], '#2e4a46', 1.2);
  [[511,448],[511,460],[510,472]].forEach(function (p) { poly([[p[0] - 4, p[1]], [p[0] + 2, p[1] - 4], [p[0] + 7, p[1] - 2], [p[0], p[1] + 3]], '#bdf29b', 0.9); });
  line([500, 489], [512, 482], '#16302c', 2.4);

  // bottom shell brackets
  [[180,220],[245,290],[345,365],[415,405],[485,445],[555,485],[625,527],[695,570],[768,608],[838,648],[908,690],[978,728],[1048,770],[1118,810],[1215,850],[1285,862]].forEach(function (z) {
    var x = 480 + z[0] / 3, y = 430 + z[1] / 3;
    poly([[x - 11, y + 6], [x - 8, y], [x - 1, y], [x - 6, y + 3], [x - 8, y + 10]], '#3a9fc0', 0.9);
    poly([[x - 8, y], [x - 2, y - 5], [x + 6, y - 1], [x + 1, y + 4]], '#5be0f5', 1);
    poly([[x + 1, y + 4], [x + 6, y - 1], [x + 8, y + 11], [x + 3, y + 14]], '#4aa9d2', 1);
  });
  poly([[917, 727], [925, 722], [927, 728], [921, 733]], '#8af06a', 0.8);

  // selected work plane marker
  out.push('<g fill="#9aa0e8" fill-opacity=".3" stroke="#8f98dd" stroke-width="1.300"><path d="M702 575l26 15v28l-26-15z"/><path fill="none" d="M702 603v16l32-18M690 597l25-14 24 14M690 597l38 22 11-19"/></g>');
  document.getElementById('hull').innerHTML = out.join('');
})();
</script>
</body>
</html>
